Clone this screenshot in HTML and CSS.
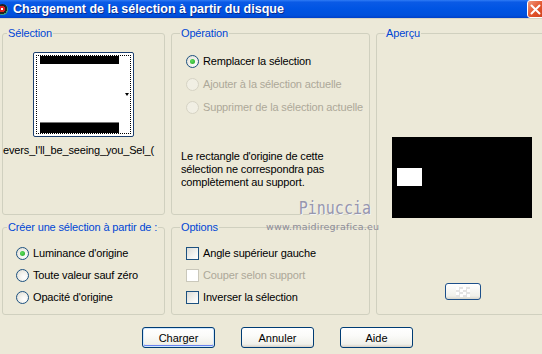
FILE: index.html
```html
<!DOCTYPE html>
<html lang="fr">
<head>
    <meta charset="UTF-8">
    <title>Chargement de la sélection à partir du disque</title>
    <link rel="stylesheet" href="styles.css">
</head>
<body>
    <div class="window">
        <div class="titlebar">
            <span class="app-icon"></span>
            <span class="title">Chargement de la sélection à partir du disque</span>
            <span class="close-btn">
                <svg width="11" height="11" viewBox="0 0 11 11"><path d="M1.5 1.5 L9.5 9.5 M9.5 1.5 L1.5 9.5" stroke="#fff" stroke-width="2" stroke-linecap="round"/></svg>
            </span>
        </div>

        <div class="panels">
            <fieldset class="group group-sel">
                <legend class="near">Sélection</legend>
                <div class="thumb">
                    <div class="thumb-focus">
                        <div class="thumb-img">
                            <div class="band band-top"></div>
                            <div class="band band-bottom"></div>
                        </div>
                        <div class="thumb-strip"><span class="tiny-arrow"></span></div>
                    </div>
                </div>
                <div class="filename">evers_I'll_be_seeing_you_Sel_(</div>
            </fieldset>

            <fieldset class="group group-op">
                <legend>Opération</legend>
                <div class="choices choices-op">
                    <label class="choice"><span class="radio checked"></span>Remplacer la sélection</label>
                    <label class="choice disabled"><span class="radio"></span>Ajouter à la sélection actuelle</label>
                    <label class="choice disabled"><span class="radio"></span>Supprimer de la sélection actuelle</label>
                </div>
                <p class="note">Le rectangle d'origine de cette<br>sélection ne correspondra pas<br>complètement au support.</p>
            </fieldset>

            <fieldset class="group group-preview">
                <legend>Aperçu</legend>
                <div class="preview">
                    <div class="preview-sel"></div>
                </div>
                <div class="mini-btn"><span class="checker"></span></div>
            </fieldset>

            <fieldset class="group group-create">
                <legend class="near">Créer une sélection à partir de :</legend>
                <div class="choices choices-low">
                    <label class="choice"><span class="radio checked"></span>Luminance d'origine</label>
                    <label class="choice"><span class="radio"></span>Toute valeur sauf zéro</label>
                    <label class="choice"><span class="radio"></span>Opacité d'origine</label>
                </div>
            </fieldset>

            <fieldset class="group group-opts">
                <legend>Options</legend>
                <div class="choices choices-low">
                    <label class="choice"><span class="check"></span>Angle supérieur gauche</label>
                    <label class="choice disabled"><span class="check"></span>Couper selon support</label>
                    <label class="choice"><span class="check"></span>Inverser la sélection</label>
                </div>
            </fieldset>
        </div>

        <div class="buttons">
            <button class="btn default">Charger</button>
            <button class="btn">Annuler</button>
            <button class="btn">Aide</button>
        </div>

        <div class="watermark">
            <span class="wm-name">Pinuccia</span>
            <span class="wm-site">www.maidiregrafica.eu</span>
        </div>
    </div>
</body>
</html>
```

FILE: styles.css
```css
body {
    margin: 0;
    background: #ece9d8;
    font-family: "Liberation Sans", Arial, sans-serif;
    font-size: 11px;
    letter-spacing: -0.15px;
    color: #000;
    overflow: hidden;
}
.window {
    position: relative;
    width: 542px;
    height: 354px;
    overflow: hidden;
    background: #ece9d8;
}

/* title bar */
.titlebar {
    height: 18px;
    display: flex;
    align-items: center;
    overflow: hidden;
    background: linear-gradient(#2f7bf5 0%, #0a5ae6 12%, #0054e3 50%, #0050dc 85%, #0040c8 100%);
    border-bottom: 1px solid #d8d4c4;
}
.app-icon {
    width: 11px;
    height: 11px;
    margin-left: -3px;
    border-radius: 50%;
    background: radial-gradient(circle at 45% 45%, #fff 0 15%, #d22 16% 35%, #222 36% 60%, #3a8 61% 100%);
    flex: none;
}
.title {
    margin-left: 5px;
    color: #fff;
    font-weight: bold;
    font-size: 12.5px;
    letter-spacing: 0;
    text-shadow: 1px 1px 0 #0a2a8c;
    white-space: nowrap;
}
.close-btn {
    margin-left: auto;
    margin-right: -8px;
    width: 23px;
    height: 18px;
    flex: none;
    display: flex;
    align-items: center;
    justify-content: center;
    padding-right: 6px;
    box-sizing: border-box;
    border: 1px solid #fff;
    border-radius: 3px;
    background: linear-gradient(135deg, #f29a7d, #e2542c 45%, #c73a14);
}

/* group boxes */
.panels {
    display: grid;
    grid-template-columns: 163px 199px 200px;
    grid-template-rows: 188px 94px;
    column-gap: 6px;
    row-gap: 6px;
    padding: 8px 0 0 2px;
}
.group {
    margin: 0;
    padding: 0;
    min-width: 0;
    border: 1px solid #d0d0bf;
    border-radius: 3px;
}
.group legend {
    color: #0046d5;
    line-height: 13px;
    padding: 0 1px;
    margin-left: 8px;
}
.group legend.near {
    margin-left: 4px;
}
.group-sel { grid-column: 1; grid-row: 1; }
.group-op { grid-column: 2; grid-row: 1; }
.group-preview { grid-column: 3; grid-row: 1 / 3; }
.group-create { grid-column: 1; grid-row: 2; }
.group-opts { grid-column: 2; grid-row: 2; }

/* selection thumbnail */
.thumb {
    width: 101px;
    height: 85px;
    box-sizing: border-box;
    margin: 12px 0 0 30px;
    padding: 2px;
    border: 1px solid #1c3f6e;
    border-radius: 2px;
    background: #fff;
}
.thumb-focus {
    height: 100%;
    box-sizing: border-box;
    border: 1px dotted #000;
    display: flex;
    padding-left: 3px;
}
.thumb-img {
    width: 79px;
    display: flex;
    flex-direction: column;
    justify-content: space-between;
}
.band {
    background: #000;
}
.band-top { height: 8px; }
.band-bottom { height: 10px; border-top: 1px solid #777; }
.thumb-strip {
    flex: 1;
    display: flex;
    align-items: center;
    justify-content: flex-end;
    padding-right: 1px;
}
.tiny-arrow {
    width: 0;
    height: 0;
    border-left: 2px solid transparent;
    border-right: 2px solid transparent;
    border-top: 3px solid #000;
}
.filename {
    margin-top: 7px;
    line-height: 13px;
    white-space: nowrap;
}

/* radios and checkboxes */
.choices {
    display: flex;
    flex-direction: column;
    padding-left: 13px;
}
.choices-op { margin-top: 14px; gap: 9px; }
.choices-low { margin-top: 12px; gap: 8px; }
.group-opts .choices { padding-left: 14px; }
.group-op .choices { padding-left: 14px; }
.choice {
    display: flex;
    align-items: center;
    height: 14px;
    gap: 4px;
    white-space: nowrap;
}
.choice.disabled {
    color: #aca899;
}
.radio {
    width: 13px;
    height: 13px;
    box-sizing: border-box;
    flex: none;
    border-radius: 50%;
    border: 1px solid #1c5180;
    background: radial-gradient(circle at 65% 65%, #fff 0%, #f4f3ee 40%, #dcdad0 100%);
    display: flex;
    align-items: center;
    justify-content: center;
}
.radio.checked::after {
    content: "";
    width: 5px;
    height: 5px;
    border-radius: 50%;
    background: radial-gradient(circle at 40% 40%, #5fe05f, #21a121);
}
.disabled .radio {
    border-color: #d6d3c4;
    background: #f1efe4;
}
.check {
    width: 13px;
    height: 13px;
    box-sizing: border-box;
    flex: none;
    border: 1px solid #1c5180;
    background: linear-gradient(135deg, #dcdcd7, #f7f7f4 70%, #fff);
}
.disabled .check {
    border-color: #cac8bb;
    background: #fff;
}
.note {
    margin: 36px 0 0 9px;
    line-height: 13px;
}

/* preview */
.preview {
    width: 140px;
    height: 81px;
    margin: 97px 0 0 15px;
    background: #000;
    padding: 31px 0 0 5px;
    box-sizing: border-box;
}
.preview-sel {
    width: 25px;
    height: 18px;
    background: #fff;
}
.mini-btn {
    width: 36px;
    height: 17px;
    box-sizing: border-box;
    margin: 65px 0 0 68px;
    border: 1px solid #1c4f8a;
    border-radius: 3px;
    background: linear-gradient(#fff, #f0f0ea 80%, #d8d6cc);
    display: flex;
    align-items: center;
    justify-content: center;
}
.checker {
    width: 14px;
    height: 10px;
    background: repeating-conic-gradient(#e4e4e4 0 25%, #fff 0 50%) 0 0 / 7px 5px;
}

/* buttons */
.buttons {
    display: flex;
    gap: 26px;
    padding-left: 142px;
    margin-top: 12px;
}
.btn {
    width: 73px;
    height: 21px;
    padding: 0;
    font-family: "Liberation Sans", Arial, sans-serif;
    font-size: 11px;
    color: #000;
    border: 1px solid #003c74;
    border-radius: 3px;
    background: linear-gradient(#fff 0%, #fbfbf9 40%, #f0f0ea 85%, #d6d0c5 100%);
}
.btn.default {
    box-shadow: inset 0 0 0 1px #cee7ff, inset 0 -1px 0 1px #6982ee;
}

/* watermark */
.watermark {
    position: absolute;
    left: 266px;
    top: 199px;
    width: 130px;
    display: flex;
    flex-direction: column;
    align-items: flex-end;
    pointer-events: none;
}
.wm-name {
    margin-right: 25px;
    font-family: "DejaVu Sans Mono", monospace;
    font-size: 15px;
    line-height: 18px;
    letter-spacing: 0;
    color: #9696ae;
    transform: scaleY(1.2);
    text-shadow: 1px 1px 0 #f4f4f4;
}
.wm-site {
    align-self: flex-start;
    margin-top: 4px;
    font-family: "DejaVu Sans", sans-serif;
    font-size: 9.5px;
    line-height: 11px;
    color: #8c8c98;
    letter-spacing: 0.2px;
}
```
